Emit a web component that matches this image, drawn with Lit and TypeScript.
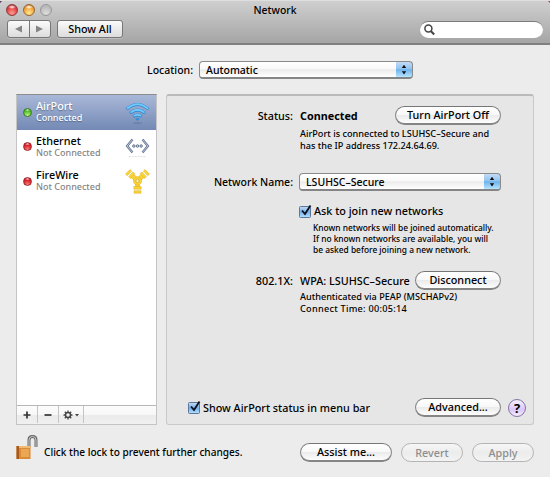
import { LitElement, html, css, svg } from "lit";
import { customElement, property } from "lit/decorators.js";
import { classMap } from "lit/directives/class-map.js";

@customElement("push-button")
class PushButton extends LitElement {
  @property({ type: Boolean }) disabled = false;
  static styles = css`
    :host { display: block; }
    button { display: block; box-sizing: border-box; width: 100%; height: 19px; padding: 0 0 1px; border: 1px solid #858585;
      border-top-color: #767676; border-bottom: 2px solid #858585; border-radius: 10px; color: #000;
      background: linear-gradient(#fff, #f8f8f8 48%, #ebebeb 52%, #fdfdfd); font: inherit; letter-spacing: inherit; line-height: 15px; white-space: nowrap; }
    button:disabled { color: #8e8e8e; border-color: #b4b4b4; border-bottom-width: 1px; background: linear-gradient(#f6f6f6, #ececec 52%, #f3f3f3); }
  `;
  render() { return html`<button ?disabled=${this.disabled}><slot></slot></button>`; }
}

@customElement("popup-menu")
class PopupMenu extends LitElement {
  static styles = css`
    :host { display: flex; box-sizing: border-box; height: 18px; border: 1px solid #8a8a8a; border-bottom: 2px solid #858585; border-radius: 4px;
      background: linear-gradient(#fff, #f9f9f9 45%, #ebebeb 52%, #fff); overflow: hidden; }
    .value { flex: 1; padding-left: 6px; line-height: 16px; white-space: nowrap; }
    .cap { width: 16px; margin: -1px -1px -2px 0; border: 1px solid #4a55a0; border-bottom: 2px solid #6581a5; border-left: 0; border-radius: 0 4px 4px 0; background: linear-gradient(#c2dcf5, #92c3ef 45%, #6eb2ec 52%, #b6e5ff); }
    svg { display: block; width: 16px; height: 15px; }
  `;
  render() {
    return html`<span class="value"><slot></slot></span>
      <span class="cap"><svg viewBox="0 0 16 15"><path d="M8 2.8 10.2 6H5.8ZM8 12.4 10.2 9.2H5.8Z" fill="#111"/></svg></span>`;
  }
}

@customElement("check-box")
class CheckBox extends LitElement {
  static styles = css`
    :host { display: flex; align-items: center; white-space: nowrap; }
    svg { width: 15px; height: 15px; flex: none; }
  `;
  render() {
    return html`<svg viewBox="0 0 15 15">
      <defs><linearGradient id="c" x2="0" y2="1"><stop stop-color="#c9dcf2"/><stop offset=".5" stop-color="#76b0e8"/><stop offset="1" stop-color="#b5e3ff"/></linearGradient></defs>
      <rect x=".5" y="2.5" width="11" height="11" rx="1" fill="url(#c)" stroke="#5d769b"/>
      <path d="M3 6.5 6 10 11.5 1.5" fill="none" stroke="#0b1020" stroke-width="1.8"/></svg><slot></slot>`;
  }
}

const airport = svg`
  <ellipse cx="13" cy="24" rx="5" ry="1.2" fill="#50618b" opacity=".3"/>
  <g fill="none" stroke="#2384d0" stroke-width="3"><path d="M1.6 9.6Q13 -.2 24.4 9.6"/><path d="M5.2 13.6Q13 7.2 20.8 13.6"/><path d="M8.8 17.3Q13 13.9 17.2 17.3"/></g>
  <g fill="none" stroke="#74c9fb" stroke-width="1.9"><path d="M2 9.2Q13 -.4 24 9.2"/><path d="M5.6 13.1Q13 7.1 20.4 13.1"/><path d="M9.2 16.8Q13 13.8 16.8 16.8"/></g>
  <path d="M10.8 19.6Q13 18 15.2 19.6L13 22Z" fill="#2c8ed8"/>`;
const ethernet = svg`
  <g fill="none" stroke="#64758f" stroke-width="2.4"><path d="M7.8 5.8 2.2 12.5 7.8 19.2"/><path d="M18.2 5.8 23.8 12.5 18.2 19.2"/></g>
  <g fill="none" stroke="#c7d0df" stroke-width=".9"><path d="M7.8 5.8 2.2 12.5 7.8 19.2"/><path d="M18.2 5.8 23.8 12.5 18.2 19.2"/></g>
  <g fill="#d4dae4" stroke="#52627c" stroke-width=".9"><circle cx="9.2" cy="12.5" r="1.3"/><circle cx="13" cy="12.5" r="1.3"/><circle cx="16.8" cy="12.5" r="1.3"/></g>
  <path d="M4 23.5H22" stroke="#ddd" stroke-dasharray="2 1"/>`;
const firewire = svg`
  <g fill="#f9d535" stroke="#dcaa1b" stroke-width=".5">
    <path d="M10.9 15H15.1V18.2H10.9Z"/><path d="M9.2 18.2H16.8V21H9.2Z"/><path d="M9.4 22.6H16.6V25.2H9.4Z"/>
    <path d="M10.2 12.2 6.4 9 9.4 5.6 13 9Z"/><path d="M5.6 9.8 3.8 8 8.4 3 10.2 4.8Z"/><path d="M2.3 7 .6 5.3 5.2 .6 6.9 2.2Z"/>
    <path d="M15.8 12.2 19.6 9 16.6 5.6 13 9Z"/><path d="M20.4 9.8 22.2 8 17.6 3 15.8 4.8Z"/><path d="M23.7 7 25.4 5.3 20.8 .6 19.1 2.2Z"/>
    <circle cx="13" cy="12.4" r="4.3"/>
  </g><circle cx="13" cy="12.4" r="1.7" fill="#fff8d0" stroke="#c99a18" stroke-width=".7"/>`;

const services = [
  { name: "AirPort", state: "Connected", icon: airport, on: true },
  { name: "Ethernet", state: "Not Connected", icon: ethernet, on: false },
  { name: "FireWire", state: "Not Connected", icon: firewire, on: false },
];

@customElement("app-root")
class AppRoot extends LitElement {
  static styles = css`
    :host { display: flex; flex-direction: column; box-sizing: border-box; width: 550px; height: 477px; overflow: hidden; background: #ececec; color: #000;
      font: 500 10.8px/16px "Noto Sans", "Open Sans", sans-serif; }
    svg { display: block; flex: none; }
    .bar { height: 45px; box-sizing: border-box; border-top: 1px solid #dedede; border-bottom: 2px solid #808080; flex: none;
      background: linear-gradient(135deg, #5c3a5e 1px, transparent 2px), linear-gradient(225deg, #b8486c 1px, transparent 2px), linear-gradient(#cfcfcf, #a5a5a5); }
    .titles { display: grid; grid-template-columns: 1fr auto 1fr; height: 17px; align-items: center; font-size: 10.4px; }
    .lights { display: flex; gap: 5px; padding-left: 6px; }
    .light { width: 12px; height: 12px; box-sizing: border-box; border-radius: 50%; border: 1px solid #8885; }
    .red { background: radial-gradient(ellipse 4px 2px at 50% 20%, #fff, transparent), radial-gradient(circle at 50% 80%, #ff9c92, #e13d42 60%, #9f2228); border-color: #8f3939; }
    .amber { background: radial-gradient(ellipse 4px 2px at 50% 20%, #fff, transparent), radial-gradient(circle at 50% 80%, #ffe78c, #f0a23b 60%, #b86417); border-color: #98662f; }
    .gray { background: radial-gradient(circle at 50% 85%, #dedede, #bababa 70%); border-color: #979797; }
    .tools { display: flex; align-items: center; height: 22px; padding: 0 7px; }
    .seg, .show { display: flex; box-sizing: border-box; height: 18px; border: 1px solid #777; border-radius: 3px; background: linear-gradient(#fbfbfb, #dcdcdc); box-shadow: 0 1px #d0d0d080; }
    .seg { width: 44px; margin-right: 6px; }
    .seg svg { width: 21px; height: 16px; }
    .seg svg + svg { border-left: 1px solid #777; width: 20px; }
    .show { width: 66px; justify-content: center; }
    .search { display: flex; align-items: center; margin-left: auto; width: 123px; height: 17px; box-sizing: border-box; border-radius: 9px; background: #fff; border-top: 1px solid #7b7b7b; padding-left: 4px; }
    .place { display: flex; align-items: center; justify-content: flex-end; height: 18px; width: 413px; margin-top: 16px; gap: 6px; flex: none; font-size: 10.5px; }
    .place popup-menu { width: 214px; }
    .main { display: flex; gap: 9px; margin: 15px 16px 0 16px; height: 331px; flex: none; }
    .side { display: flex; flex: none; flex-direction: column; width: 141px; box-sizing: border-box; border: 1px solid #c4c4c4; border-top-color: #8c8c8c; background: #fff; }
    .item { display: flex; align-items: center; height: 34.5px; box-sizing: border-box; padding: 0 6px 0 6px; }
    .sel { color: #fff; background: linear-gradient(#a9b8d8, #7389b4); text-shadow: 0 1px 1px #3c4e74aa; }
    .dot { width: 9px; height: 9px; box-sizing: border-box; border-radius: 50%; border: 1px solid #9a2528; background: radial-gradient(ellipse 2.5px 1.5px at 50% 22%, #fffc, transparent), radial-gradient(circle at 50% 90%, #ff8a80, #d51f2a 55%); background-origin: border-box; margin-right: 4px; }
    .on { border-color: #3b7a26; background: radial-gradient(ellipse 2.5px 1.5px at 50% 22%, #fffc, transparent), radial-gradient(circle at 50% 90%, #ccff85, #45b425 60%); background-origin: border-box; }
    .name { flex: 1; line-height: 12px; white-space: nowrap; }
    .name small { display: block; font-size: 9px; line-height: 12px; color: #858585; }
    .sel small { color: #fff; }
    .foot { display: flex; margin-top: auto; height: 18px; border-top: 1px solid #b7b7b7; background: linear-gradient(#fcfcfc, #f7f7f7 50%, #ebebeb 51%, #f0f0f0); }
    .foot svg { border-right: 1px solid #c4c4c4; }
    .panel { flex: 1; min-width: 0; display: flex; flex-direction: column; box-sizing: border-box; border: 1px solid #c9c9c9; border-top: 2px solid #bababa; border-radius: 3px; background: #e6e6e6; padding: 10px 32px 0 17px; }
    .row { display: grid; grid-template-columns: 116px 1fr auto; align-items: center; height: 19px; flex: none; white-space: nowrap; }
    .row > :first-child { text-align: right; padding-right: 7px; }
    .row popup-menu { grid-column: 2 / 4; margin-left: -1px; }
    .network { margin-top: 21px; font-size: 10.5px; }
    .auth { margin-top: 16px; }
    .note { font-size: 9.15px; line-height: 11.5px; margin: 3px 0 0 116px; white-space: nowrap; }
    .auth + .note { margin-top: 1px; }
    .time { letter-spacing: .27px; }
    .fine { font-size: 8.4px; line-height: 10.75px; margin: 4px 0 0 129px; white-space: nowrap; }
    .ask { margin: 12px 0 0 115px; height: 16px; }
    .end { display: flex; align-items: center; margin: auto -25px 7px 4px; height: 19px; }
    .end push-button { width: 86px; margin-left: auto; }
    .help { display: grid; place-items: center; width: 18px; height: 18px; box-sizing: border-box; margin-left: 7px; border: 1px solid #8374a0; border-radius: 50%; background: linear-gradient(#f7f1ff, #dbc7fa 60%, #f5edff); font-weight: 700; font-size: 13px; line-height: 14px; }
    .bottom { display: flex; align-items: center; margin: 13px 16px 0 15px; height: 27px; flex: none; white-space: nowrap; font-size: 10.1px; }
    .bottom svg { margin: -9px 4px 0 0; }
    .acts { display: flex; gap: 9px; margin-left: auto; padding-top: 2px; font-size: 10.8px; }
    .w91 { width: 92px; } .w62 { width: 62px; }
    .w106 { width: 106px; } .w85 { width: 86px; }
    b { font-weight: 700; }
  `;
  render() {
    return html`
      <header class="bar">
        <div class="titles"><div class="lights"><i class="light red"></i><i class="light amber"></i><i class="light gray"></i></div><span>Network</span><span></span></div>
        <div class="tools">
          <div class="seg">
            <svg viewBox="0 0 21 16"><path d="M14 4.5V11.5L7 8Z" fill="#858585"/></svg>
            <svg viewBox="0 0 20 16"><path d="M6 4.5V11.5L13 8Z" fill="#858585"/></svg>
          </div>
          <div class="show">Show All</div>
          <div class="search"><svg width="11" height="12" viewBox="0 0 11 12" fill="none" stroke="#454545"><circle cx="4.4" cy="4.6" r="3.5" stroke-width="1.5"/><path d="M7 7.2 10.2 10.5" stroke-width="2"/></svg></div>
        </div>
      </header>
      <div class="place"><span>Location:</span><popup-menu>Automatic</popup-menu></div>
      <div class="main">
        <nav class="side">
          ${services.map((s) => html`<div class=${classMap({ item: true, sel: s.on })}>
            <i class=${classMap({ dot: true, on: s.on })}></i>
            <div class="name">${s.name}<small>${s.state}</small></div>
            <svg width="25" height="25" viewBox="0 0 26 26">${s.icon}</svg></div>`)}
          <div class="foot">
            <svg width="20" height="17"><path d="M6.5 9H13.5M10 5.5V12.5" stroke="#333" stroke-width="1.7"/></svg>
            <svg width="20" height="17"><path d="M6.5 9H13.5" stroke="#333" stroke-width="1.7"/></svg>
            <svg width="24" height="17"><circle cx="9" cy="9" r="2.5" fill="none" stroke="#444" stroke-width="1.5"/><path d="M9 4.5V6M9 12V13.5M4.5 9H6M12 9H13.5M5.8 5.8 7 7M11 11 12.2 12.2M5.8 12.2 7 11M11 7 12.2 5.8" stroke="#444" stroke-width="1.3"/><path d="M16 8H20L18 10.5Z" fill="#444"/></svg>
          </div>
        </nav>
        <section class="panel">
          <div class="row"><span>Status:</span><b>Connected</b><push-button class="w106">Turn AirPort Off</push-button></div>
          <div class="note">AirPort is connected to LSUHSC–Secure and<br>has the IP address 172.24.64.69.</div>
          <div class="row network"><span>Network Name:</span><popup-menu>LSUHSC–Secure</popup-menu></div>
          <check-box class="ask">Ask to join new networks</check-box>
          <div class="fine">Known networks will be joined automatically.<br>If no known networks are available, you will<br>be asked before joining a new network.</div>
          <div class="row auth"><span>802.1X:</span><span>WPA: LSUHSC–Secure</span><push-button class="w85">Disconnect</push-button></div>
          <div class="note">Authenticated via PEAP (MSCHAPv2)<br><span class="time">Connect Time: 00:05:14</span></div>
          <div class="end"><check-box>Show AirPort status in menu bar</check-box><push-button>Advanced...</push-button><span class="help">?</span></div>
        </section>
      </div>
      <footer class="bottom">
        <svg width="25" height="27" viewBox="0 0 25 27">
          <path d="M14 13V6Q14 2.5 17.5 2.5 21 2.5 21 6V13" fill="none" stroke="#686868" stroke-width="3"/><path d="M14 13V6Q14 2.5 17.5 2.5 21 2.5 21 6V13" fill="none" stroke="#ccc"/>
          <path d="M1.5 12H15.5V25H1.5Z" fill="#d98b36"/><path d="M1.5 12H15.5V14H1.5Z" fill="#efba72"/><path d="M1.5 12H4V25H1.5Z" fill="#a7591c"/><path d="M6 15H14V23H6Z" fill="#eba754"/>
        </svg>
        <span>Click the lock to prevent further changes.</span>
        <div class="acts"><push-button class="w91">Assist me...</push-button><push-button class="w62" disabled>Revert</push-button><push-button class="w62" disabled>Apply</push-button></div>
      </footer>`;
  }
}
